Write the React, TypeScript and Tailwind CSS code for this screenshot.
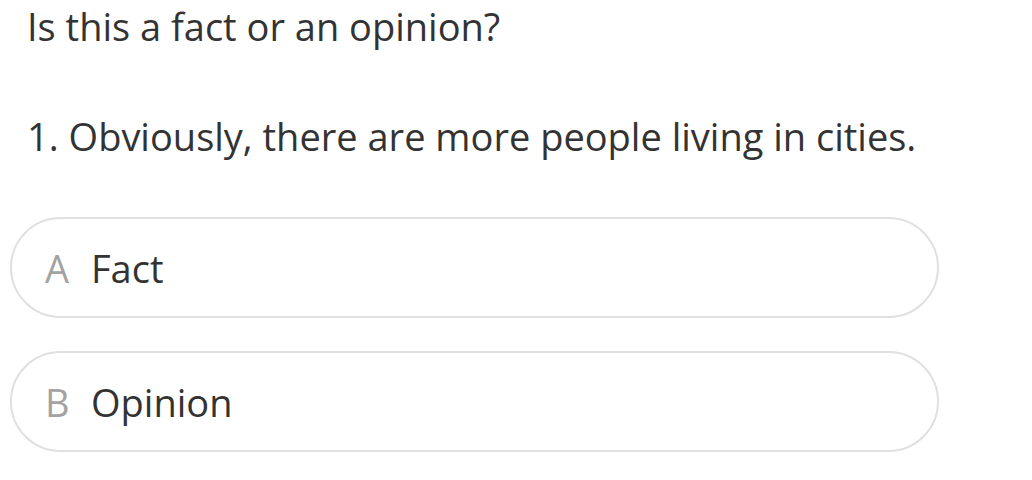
export default function App() {
  const font = { fontFamily: '"Open Sans", "Noto Sans", sans-serif' };
  return (
    <div className="w-[1032px] h-[480px] bg-white text-[#333333] overflow-hidden" style={font}>
      <div className="pl-[27px] text-[38px] leading-[52px]">Is this a fact or an opinion?</div>
      <div className="pl-[27px] mt-[60px] text-[38px] leading-[48px]">1. Obviously, there are more people living in cities.</div>
      <div className="pl-[10px] mt-[57px] flex flex-col gap-[33px] w-[939px]">
        {[
          ["A", "Fact"],
          ["B", "Opinion"],
        ].map(([l, t]) => (
          <div key={l} className="h-[101px] rounded-full border-2 border-[#e0e0e0] flex items-center pl-[33px] text-[38px] leading-[48px]">
            <span className="text-[#a3a3a3] w-[46px]">{l}</span>
            <span>{t}</span>
          </div>
        ))}
      </div>
    </div>
  );
}
